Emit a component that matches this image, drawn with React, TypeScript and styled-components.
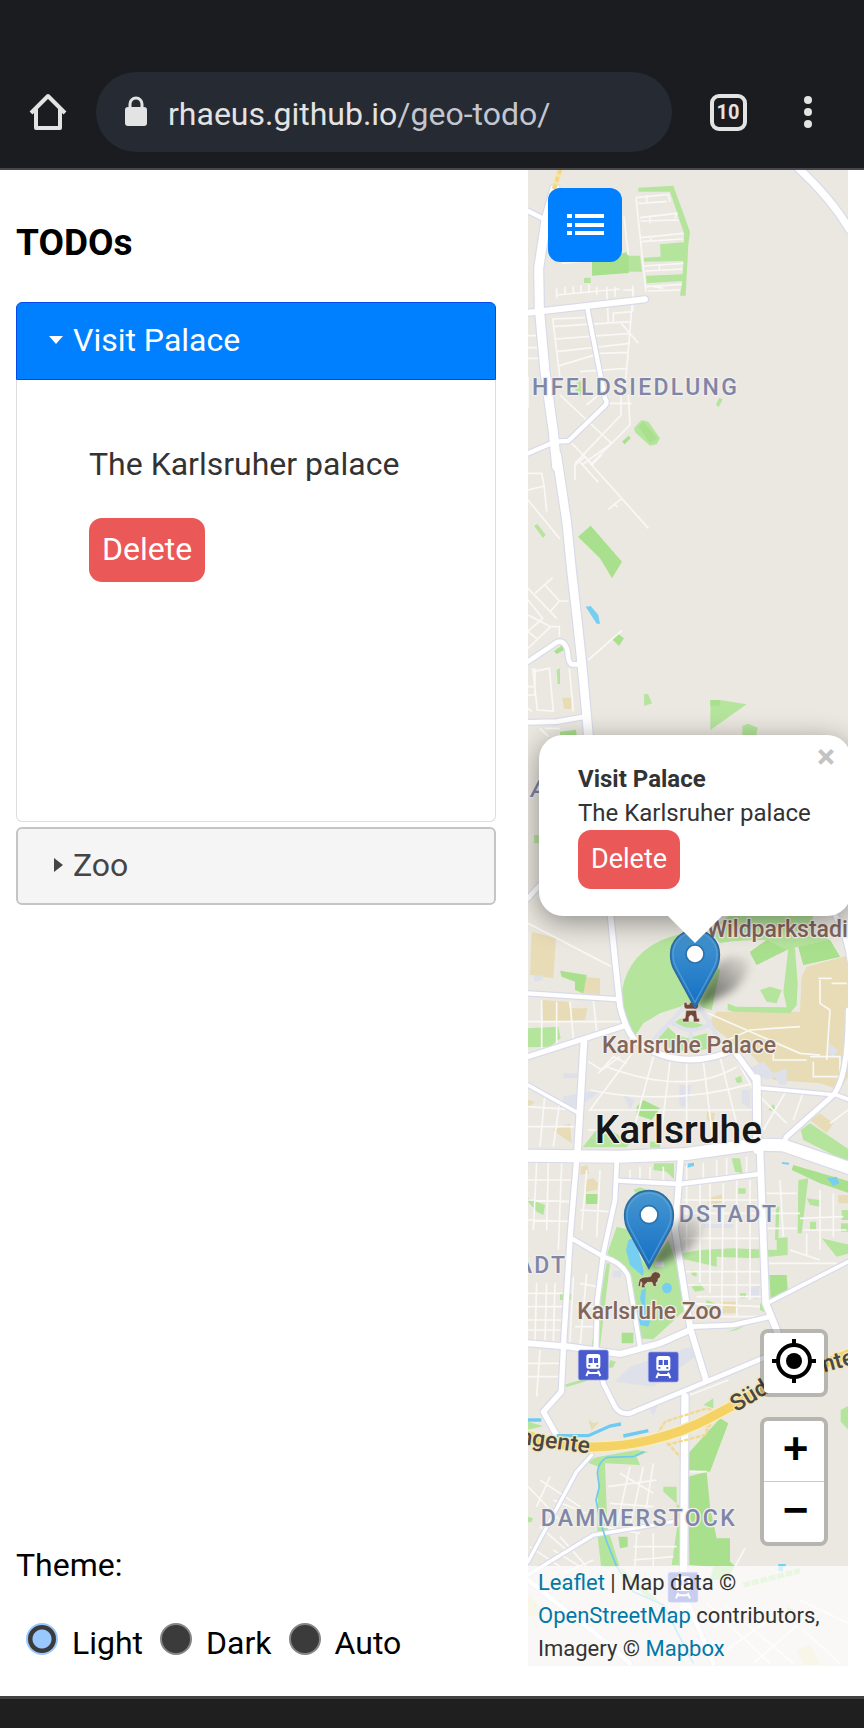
import React, { useState } from 'react';
import styled, { createGlobalStyle, css } from 'styled-components';

const GlobalStyle = createGlobalStyle`
  *, *::before, *::after { box-sizing: border-box; }
  body {
    margin: 0;
    background: #fff;
    color: #000;
    font-family: Roboto, "Liberation Sans", sans-serif;
    font-size: 32px;
  }
  button, input { font: inherit; margin: 0; }
`;

/* ---------- browser frame ---------- */

const Screen = styled.div`
  display: flex;
  flex-direction: column;
  min-height: 100vh;
`;

const BrowserBar = styled.header`
  display: flex;
  align-items: center;
  gap: 24px;
  padding: 72px 24px 16px;
  background: #1b1c20;
  border-bottom: 2px solid #46474c;
`;

const BarButton = styled.button`
  display: flex;
  align-items: center;
  justify-content: center;
  width: 48px;
  height: 48px;
  padding: 0;
  border: 0;
  background: none;
  color: #e3e3e3;
`;

const AddressBar = styled.div`
  display: flex;
  flex: 1;
  align-items: center;
  gap: 20px;
  height: 80px;
  padding: 0 28px;
  border-radius: 40px;
  background: #262a33;
  color: #e3e3e3;
  line-height: 40px;
`;

const Url = styled.span`
  padding-top: 3px;
`;

const UrlPath = styled.span`
  color: #c3c6cf;
`;

const BarActions = styled.div`
  display: flex;
  gap: 32px;
  padding: 0 8px;
`;

const TabCount = styled.span`
  display: flex;
  align-items: center;
  justify-content: center;
  width: 37px;
  height: 37px;
  border: 4px solid #e3e3e3;
  border-radius: 9px;
  font-size: 20px;
  font-weight: 700;
`;

const SystemBar = styled.footer`
  height: 32px;
  border-top: 3px solid #404242;
  background: #1f1f1f;
`;

/* ---------- page layout ---------- */

const Page = styled.main`
  display: flex;
  flex: 1;
  padding-right: 16px;
`;

const Sidebar = styled.section`
  display: flex;
  flex-direction: column;
  flex: 0 0 528px;
  padding: 51px 32px 31px 16px;
`;

const Title = styled.h1`
  margin: 0 0 37px;
  font-size: 37px;
  font-weight: 700;
  line-height: 44px;
`;

const Accordion = styled.div`
  display: flex;
  flex-direction: column;
`;

const AccordionHeader = styled.button<{ $open: boolean }>`
  display: flex;
  align-items: center;
  gap: 9px;
  height: 78px;
  padding: 0 30px 2px;
  border: 2px solid #c5c5c5;
  border-radius: 6px;
  background: #f5f5f5;
  color: #454545;
  text-align: left;
  &:not(:first-child) { margin-top: 5px; }
  ${({ $open }) => $open && css`
    border-color: #0349f0;
    border-radius: 6px 6px 0 0;
    border-width: 1px;
    padding: 0 31px 2px;
    background: #007fff;
    color: #fff;
  `}
`;

const AccordionPanel = styled.div`
  display: flex;
  flex-direction: column;
  align-items: flex-start;
  gap: 34px;
  min-height: 442px;
  padding: 64px 72px;
  border: 1px solid #ddd;
  border-top: 0;
  border-radius: 0 0 6px 6px;
  color: #333;
`;

const PanelText = styled.p`
  margin: 0;
  line-height: 40px;
`;

const DeleteButton = styled.button<{ $small?: boolean }>`
  height: ${({ $small }) => ($small ? 59 : 64)}px;
  padding: 0 13px 2px;
  border: 0;
  border-radius: 13px;
  background: #ea5958;
  color: #fff;
  font-size: ${({ $small }) => ($small ? 27 : 32)}px;
`;

const ThemeGroup = styled.fieldset`
  display: flex;
  flex-wrap: wrap;
  margin: auto 0 0;
  padding: 0;
  border: 0;
`;

const ThemeLegend = styled.legend`
  margin-bottom: 34px;
  padding: 0;
  line-height: 44px;
`;

const ThemeOption = styled.label`
  display: flex;
  align-items: center;
  gap: 14px;
  margin-right: 17px;
  line-height: 44px;
  &:first-of-type { margin-left: 10px; }
`;

const Radio = styled.input`
  appearance: none;
  width: 32px;
  height: 32px;
  margin-bottom: 8px;
  border: 2px solid #858585;
  border-radius: 50%;
  background: #3b3b3b;
  &:checked {
    border-color: #99c8ff;
    background: radial-gradient(circle, #99c8ff 9px, #3b3b3b 10px);
  }
`;

/* ---------- map ---------- */

const MapArea = styled.section`
  position: relative;
  flex: 1;
  min-width: 0;
  margin-bottom: 30px;
  overflow: hidden;
  background: #ebe8e1;
`;

const MapCanvas = styled.svg`
  position: absolute;
  inset: 0;
  width: 100%;
  height: 100%;
`;

const MenuButton = styled.button`
  position: absolute;
  top: 18px;
  left: 20px;
  display: flex;
  align-items: center;
  justify-content: center;
  width: 74px;
  height: 74px;
  padding: 0;
  border: 0;
  border-radius: 12px;
  background: #007fff;
`;

const Popup = styled.article`
  position: absolute;
  top: 565px;
  left: 11px;
  width: 312px;
  height: 181px;
  padding: 27px 39px;
  border-radius: 24px;
  background: #fff;
  box-shadow: 0 6px 28px rgba(0, 0, 0, 0.4);
  color: #333;
  font-size: 24px;
  line-height: 34px;
  white-space: nowrap;
`;

const PopupTitle = styled.strong`
  display: block;
`;

const PopupText = styled.p`
  margin: 0;
`;

const PopupClose = styled.button`
  position: absolute;
  top: 7px;
  right: 11px;
  width: 28px;
  height: 28px;
  padding: 0;
  border: 0;
  background: none;
  color: #c3c3c3;
  font-size: 34px;
  font-weight: 700;
  line-height: 28px;
`;

const PopupTip = styled.span`
  position: absolute;
  top: 181px;
  left: 129px;
  width: 54px;
  height: 27px;
  background: #fff;
  clip-path: polygon(0 0, 100% 0, 50% 100%);
`;

const Overlay = styled.div`
  position: absolute;
  right: 0;
  bottom: 0;
  left: 0;
  display: flex;
  flex-direction: column;
  align-items: flex-end;
  gap: 20px;
`;

const ControlBox = styled.div`
  display: flex;
  flex-direction: column;
  margin-right: 20px;
  border: 4px solid rgba(0, 0, 0, 0.22);
  border-radius: 8px;
  background: #fff;
  background-clip: padding-box;
`;

const ControlButton = styled.button`
  display: flex;
  align-items: center;
  justify-content: center;
  width: 60px;
  height: 60px;
  padding: 0 0 4px;
  border: 0;
  background: none;
  color: #000;
  font-family: "Liberation Sans", sans-serif;
  font-size: 44px;
  font-weight: 700;
  line-height: 56px;
  text-indent: 3px;
  & + & {
    height: 61px;
    border-top: 1px solid #ccc;
  }
`;

const Attribution = styled.p`
  align-self: stretch;
  margin: 0;
  padding: 0 10px 1px;
  background: rgba(255, 255, 255, 0.7);
  color: #333;
  font-size: 22px;
  line-height: 33px;
`;

const MapLink = styled.a`
  color: #0078a8;
  text-decoration: none;
`;

/* Map geometry. Each sheet covers one horizontal band of the city, at three
   drawing units to the pixel, and y is the offset of that band. */

type Road = [d: string, width: number];
interface Sheet {
  y: number;
  green?: string;
  park?: string;
  sand?: string;
  water?: string;
  block?: string;
  lanes?: string;
  roads?: Road[];
}

const sheets: Sheet[] = [
  {
    y: 0,
    green:
      'M355 68L460 62L510 200L505 240L497 392H480L487 348L380 355L378 332L488 328L490 288L372 290V278L422 275L420 238L492 232V205L450 80H355Z M320 272H360L366 320H320Z M192 338h20v16h-20Z M160 665l20-20 15 20-15 30Z M588 718l10-20 10 5-12 24Z M342 790L365 765L385 770L420 820L410 838L390 842L345 802Z',
    park: 'M216 292L318 262L326 272V324L216 332Z M306 830l20-18 6 8-18 18Z M355 785L370 770L412 820L390 835Z',
    lanes:
      'M348 98L378 382M348 98L445 88L450 110M355 115L440 110M360 158L470 145L465 160M362 168L475 165M362 218L490 205M365 230L488 222M372 303L490 295M375 318L488 312M378 365L485 358M385 378L480 375M312 155L325 270M380 90V115M390 158V175M392 212V230M418 300V318M402 365L430 370M110 390L300 372M110 370V400M135 365V390M160 362V388M183 360V385M207 358V385M230 365V390M260 365L265 475M285 365V395M310 375H340L322 590L312 690M338 362V440M98 460L120 640M98 462L195 458M98 485L330 470M105 522L330 505M110 560L330 535M118 602L240 565L325 562M180 620L320 610M280 470V445L335 440M300 470L355 535M24 512H55M24 548H60M24 580H62M120 690L275 835L185 900M325 690L330 780L210 900M303 690V750L165 895M260 715H335M200 720L235 690M155 835L220 900M125 295L200 288M24 635V730',
    roads: [
      ['M24 138L78 165', 14],
      ['M105 70L78 165L56 310L58 430L75 620L100 800L110 905', 27],
      ['M24 443L375 403', 18],
      ['M202 430L255 700Q264 712 255 722L145 828L105 830L24 865', 13],
      ['M825 0Q930 95 990 195', 22],
    ],
  },
  {
    y: 870,
    green:
      'M42 212l10-5 25 32-8 10Z M110 645l10-5v47h-7Z M372 718L384 717L396 745L373 753Z M571 735H600L680 748L571 825Z M667 812L685 806L713 818L708 845H667Z M42 1140h14v25h-14Z',
    park: 'M174 245L212 212L306 320L276 370L240 310Z M276 552L292 535L312 550L297 573Z M102 588L125 572L132 585L110 597Z M571 735H600V752H571Z M120 830L168 824L170 840H120Z',
    sand: 'M126 728H156L153 762H133Z',
    water: 'M197 455L212 453L235 480L240 506H230Z',
    lanes:
      'M190 0L215 30L305 130L385 220M165 75V30L195 5M215 30L245 0M305 130L265 163M283 145l10 12M175 15L235 82M24 135L120 252M24 55H65L72 90L80 170M24 105L72 93M24 400L110 490M92 515L24 580M45 415L98 368M75 390L118 438H145M118 438L92 468M24 435L68 490L24 528M24 480L92 515H118V545M24 530L50 550M205 615L305 527M38 640L52 765L100 768L88 640L38 650M24 695H42M24 720H45V640M148 640L160 770M60 820L85 845M75 820L120 820M24 760L35 770',
    roads: [
      ['M24 620L110 562Q135 552 143 590Q145 630 160 628L182 628', 14],
      ['M24 802L110 800L195 785', 14],
      ['M110 0L140 200L155 350L170 480L185 620L207 860', 26],
      ['M24 1330L60 1290', 14],
    ],
  },
  {
    y: 2235,
    green:
      'M345 378Q288 290 312 215Q345 105 480 72L600 180L575 300L540 290H480L420 310L370 340Z M650 0H880L875 60L930 90L960 140L850 165L835 110L800 120L710 165L690 130L740 90Q640 90 600 100L570 60Z M805 115H825L833 220L830 285L810 310L640 305L623 300V280L648 290L800 292L790 245Z M720 240L750 230L785 240L770 280L740 275Z M24 355L115 350L122 385L90 410L24 412Z M188 712L245 640L330 700L320 712Z M645 505l18-8 4 20-16 3Z M745 600l15-18 8 22Z M842 660L870 640L990 720V760L850 690Z M455 345L480 325L570 350L510 365Z M415 385L445 352L470 375L500 385L560 370L580 410Q500 440 430 405Z M390 695h30v18h-30Z',
    park: 'M120 182L200 195L190 250L165 240V215L125 200Z M350 590L370 570L420 595L395 630L350 615Z M690 125L740 90L800 120L710 165Z M835 110L930 90L960 140L850 165Z',
    sand: 'M35 65L108 85L100 205L30 195Z M190 200L240 205V255L180 248Z M65 270L145 275L150 295H202L195 330L70 335Z M860 170L990 135V490L960 540L900 520L760 510L700 440L640 400L565 340L590 305L840 305L845 200Z M98 660L150 640L155 700Z M870 630L900 610L940 640L920 670Z M560 605L585 610L580 640L560 630Z M24 570l20 5-20 20Z',
    block:
      'M478 525H515L500 590H478Z M128 560L200 545L240 540L215 565L170 590H130Z M690 475L730 455L760 490L800 475V525H780L765 500L740 510Z M310 555L345 570L330 600Z M130 490H180V505H130Z M665 540H690V595L665 580Z M925 400L955 420L940 440L925 430Z M40 200L65 195L70 210L45 215Z M485 285H545V300H485Z',
    lanes:
      'M24 40L275 170M65 270V420M110 275V400M150 275L160 385M24 335H300M220 270L230 365M205 455L245 480L300 440M235 490L280 440L320 460M340 425L210 600M400 440L330 700M450 455L420 700M500 460V700M550 455L580 700M600 440L650 640M640 430L700 540M210 540Q450 590 700 520M205 600H700M260 470Q500 560 650 470M205 660H240M24 590L170 600M75 550L60 710M120 570L100 710M24 650H170M565 310L840 430L900 435M600 400L690 360L840 350M870 440H960V500H880V455M900 210V280L930 300L920 450M895 205H935M935 220H980M720 560L800 640M800 540L730 660M850 545L820 630M930 640L984 600M760 400V450H860',
    roads: [
      ['M24 250L300 268', 13],
      ['M24 440L312 348', 15],
      ['M24 525L180 612', 11],
      ['M270 0L285 150L300 290Q320 370 350 395Q420 447 510 449Q590 447 640 418', 17],
      ['M630 405L708 512', 17],
      ['M712 533L950 555L990 570', 11],
      ['M945 15Q990 90 995 200M785 710L800 680L940 555Q985 500 985 300', 15],
      ['M192 390L172 735', 20],
      ['M710 505L712 720', 24],
      ['M24 737L300 740L500 732L700 704L790 706L990 775', 36],
    ],
  },
  {
    y: 2955,
    green:
      'M290 230L330 240L340 290L385 355L445 270L495 420V480L400 568L355 565L335 400L262 310Z M340 120l20-8 25 8-30 15Z M402 40H462V88L440 65L400 60Z M635 25H660L668 70L645 65Z M24 145L75 165L70 195L50 185L24 155Z M475 312L540 300L640 295L770 300V265L803 262V315L700 325L590 320V350L480 325Z M768 170h10L775 270H765Z M835 90L865 85L845 250H833Z M860 145L900 150V170L870 165Z M905 265L990 285V310L950 320Z M965 180h25v30H965Z M963 220h25v25h-25Z M655 115h22v16h-22Z M660 430h18v15h-18Z M260 340H270L240 590L215 585Z M515 410l25-10 15 20-30 5Z M515 360l15 5v15l-15-5Z M870 215h18v25h-18Z M560 450l25 10-10 30-20-10Z M720 460h20v30l-20-10Z M620 545L680 525L650 540Z M120 432h35v18h-35Z M930 0H990V15L950 12Z',
    park: 'M820 45L990 95V130L900 100L815 60Z M198 132h35v30h-35Z M748 375H800L804 430L752 445Z M305 548h35v32h-35Z',
    sand: 'M195 90L220 85L235 100L230 120L195 125Z M182 50l20-5 5 25-25 5Z M565 145l45-13v25l-45 10Z M600 455h48v35h-42Z M955 135h30v25h-30Z M470 418l15 2v15l-15 2Z',
    water:
      'M325 270L340 265L355 300L372 365L368 378L330 345L318 300Z M426 414a15 16 0 1 0 30 0a15 16 0 1 0-30 0Z M365 420L378 415L375 465L395 500L385 530L360 525L355 500L370 480L360 445Z M495 42l27-4v10l-22 6Z M922 85L950 80L958 100L940 108Z M785 36l22 2v6l-20-2Z',
    block:
      'M285 695L330 650L510 590L540 610L400 710Z M685 415L720 405L715 450L690 440Z M278 362h25v20h-25Z M550 222h90v12h-90Z M405 335h28v15h-28Z',
    lanes:
      'M24 90H160M24 150L160 155M24 210L160 215M50 40L40 240M85 40L80 240M125 40L115 300M180 180L270 185M200 60L185 240M240 60L230 260M24 430H140M24 470H135M24 510H130M24 540H135M50 400L45 570M80 400L75 570M105 400L100 580M24 640H120M24 680H115M60 600L50 740M500 40V300M540 100V400M570 100V430M610 100L605 500M650 90V500M690 90V450M490 150H720M490 190H720M490 265H720M490 365H730M500 405H730M530 440H730M510 460L720 470M560 500H730M780 90L790 260M740 130H830M740 190H840M740 235H830M860 250V320M900 120V300M940 130V260M840 205L970 200M850 240H980M810 300L900 330M745 340H950M180 400L230 410M170 470H225M165 530H220M160 380L150 580M200 370L180 590M330 60V90M360 50V85M390 50V88M430 50V90M550 40V90M590 30V85M620 25V85M680 20V70',
    roads: [
      ['M170 30L152 240L132 560L124 725L70 785L112 860', 16],
      ['M290 40L285 150L250 310L232 450L228 590L250 700L285 770Q300 795 330 790L560 695L740 620', 14],
      ['M290 92L480 102L720 72', 13],
      ['M155 265L250 320Q310 340 325 380L360 590', 13],
      ['M24 580L150 590L300 612L420 580L510 540', 18],
      ['M515 530L640 525L750 500', 14],
      ['M737 462L990 332', 11],
      ['M482 30L465 240L490 400L512 540L558 690', 18],
      ['M720 0L737 460L772 545', 20],
    ],
  },
  {
    y: 3465,
    green:
      'M196 425L235 440L232 640L243 738H298L262 620L255 430L360 435L350 410L385 395L350 390L230 412Z M430 500H470V560L490 735H455L480 560L430 515Z M550 255l30-20v30Z M962 270L990 255V335L962 305Z M24 590l15 5-5 12H24Z M24 305L70 318L24 330Z M130 195l70-20v8l-60 18Z M270 120l18 5-10 18h-12Z',
    park: 'M600 295L625 310L570 455L500 450L505 400Z M505 470L560 455L570 560L590 655H630V725L645 738L620 780H570L580 740L508 735Z M295 650h28v30L300 685Z',
    sand: 'M205 300L222 310L238 305L215 332Z',
    block: 'M385 262l30-8-15 35Z',
    lanes:
      'M265 500L410 480M270 550L400 560M330 440L290 620M370 440L330 620M400 430L370 620M300 460L400 520M24 500L120 600M60 480L180 560M90 470L50 560M100 540L200 580M60 620L150 700M30 680L120 740M120 650L200 740M340 680H470M350 640L345 740M400 640V740M340 720L460 710M250 620L360 640M510 455h50M675 685L645 740M510 225L625 180',
    roads: [
      ['M24 725L170 455L215 405', 10],
      ['M24 765L220 645L460 605', 10],
      ['M495 230L490 865', 22],
    ],
  },
  {
    y: 4125,
    green: 'M240 0L250 80H298L270 0Z M300 80L420 185L380 170L310 110Z M800 200l25 10-20 5Z',
    sand: 'M830 330L870 315L905 375H850Z M24 160L75 220L24 230Z',
    water: 'M775 72h22v8h-8v14h-14Z',
    lanes: 'M560 190L750 370M620 200L820 370M620 330L760 230M700 370L850 240M580 260L680 200M850 270L960 370M100 30L180 80M130 100L220 60M840 180L984 250',
    roads: [
      ['M24 120L250 300L330 370', 13],
      ['M500 180L580 370', 13],
    ],
  },
];

const layers: Array<[keyof Sheet, string]> = [
  ['sand', '#e7dcb5'],
  ['green', '#b5e59d'],
  ['park', '#a9e08d'],
  ['block', '#dfe1ea'],
  ['water', '#76cef1'],
];

const PlaceLabel = styled.text<{ $kind: 'district' | 'poi' | 'city' | 'road' }>`
  font-family: Roboto, "Liberation Sans", sans-serif;
  font-weight: 500;
  font-size: 69px;
  paint-order: stroke;
  stroke: #f1efea;
  stroke-width: 8px;
  stroke-linejoin: round;
  fill: #83665b;
  ${({ $kind }) => $kind === 'district' && css`
    letter-spacing: 7px;
    fill: #7f86a8;
  `}
  ${({ $kind }) => $kind === 'city' && css`
    font-size: 117px;
    fill: #151719;
  `}
  ${({ $kind }) => $kind === 'road' && css`
    fill: #494846;
    stroke: #f3e5b3;
  `}
`;

const Marker = ({ x, y }: { x: number; y: number }) => (
  <g transform={`translate(${x} ${y})`}>
    <path d="M0 0L50 -110Q90 -175 160 -150Q175 -105 110 -50Z" fill="url(#pinShadow)" filter="url(#soft)" />
    <path
      d="M0 -2L-62 -116C-70 -130 -73 -146 -73 -162A73 73 0 0 1 73 -162C73 -146 70 -130 62 -116Z"
      fill="url(#pin)"
      stroke="#2c6c9f"
      strokeWidth="5"
    />
    <path
      d="M0 -18L-55 -120C-63 -134 -66 -148 -66 -162A66 66 0 0 1 66 -162C66 -148 63 -134 55 -120Z"
      fill="none"
      stroke="#6aaada"
      strokeOpacity="0.6"
      strokeWidth="4"
    />
    <circle cy="-163" r="27" fill="#fff" stroke="#2c72ab" strokeWidth="5" />
  </g>
);

const Station = ({ x, y }: { x: number; y: number }) => (
  <g transform={`translate(${x} ${y})`}>
    <rect width="90" height="90" rx="6" fill="#4a5ccd" stroke="#9aa5e6" strokeWidth="2" />
    <path
      fillRule="evenodd"
      d="M24 20Q24 12 32 12H58Q66 12 66 20V50Q66 56 60 56H30Q24 56 24 50ZM31 24V39H43V24ZM47 24V39H59V24ZM30 45V50H36V45ZM54 45V50H60V45Z"
      fill="#fff"
    />
    <path d="M31 62L24 78M59 62L66 78M29 69H61" stroke="#fff" strokeWidth="6" />
  </g>
);

const CityMap = () => (
  <MapCanvas viewBox="24 15 960 4488" preserveAspectRatio="xMinYMin slice" role="img" aria-label="Map of Karlsruhe">
    <defs>
      <linearGradient id="pin" x1="0" y1="0" x2="0" y2="1">
        <stop offset="0" stopColor="#4797d1" />
        <stop offset="1" stopColor="#136fc4" />
      </linearGradient>
      <linearGradient id="pinShadow" x1="0" y1="1" x2="1" y2="0">
        <stop offset="0" stopColor="#000" stopOpacity="0.65" />
        <stop offset="0.5" stopColor="#000" stopOpacity="0.35" />
        <stop offset="1" stopColor="#000" stopOpacity="0.02" />
      </linearGradient>
      <filter id="soft" x="-40%" y="-40%" width="180%" height="180%">
        <feGaussianBlur stdDeviation="12" />
      </filter>
    </defs>

    {layers.map(([key, fill]) =>
      sheets.map((s) => s[key] && (
        <path key={`${key}${s.y}`} d={s[key] as string} fill={fill} transform={`translate(0 ${s.y})`} />
      )),
    )}
    {sheets.map((s) => (
      <path key={s.y} d={s.lanes} transform={`translate(0 ${s.y})`} fill="none" stroke="#f9f8f6" strokeWidth="5" />
    ))}
    <path
      d="M490 2530L400 2625M540 2530L600 2625M455 2570Q515 2620 575 2570M512 2590V2650"
      fill="none"
      stroke="#dfe1ec"
      strokeWidth="12"
    />
    {['#d8daea', '#ffffff'].map((stroke, i) => (
      <g key={stroke} fill="none" stroke={stroke} strokeLinejoin="round" strokeLinecap="round">
        {sheets.map((s) => (s.roads ?? []).map(([d, w]) => (
          <path key={`${s.y}${d}`} d={d} transform={`translate(0 ${s.y})`} strokeWidth={i ? w : w + 7} />
        )))}
      </g>
    ))}

    <path d="M102 72L122 10" stroke="#f7e3a6" strokeWidth="16" fill="none" />
    <path d="M102 72L122 10" stroke="#f3d585" strokeWidth="10" strokeDasharray="14 10" fill="none" />

    <g transform="translate(0 3465)" fill="none">
      <g stroke="#6fcaf2" strokeWidth="10">
        <path d="M24 300H64M110 347H205L270 318L303 312M310 348L385 332" />
        <path
          d="M372 395L340 410L262 412Q235 425 232 460L238 500L228 540L242 610L262 670L290 740L340 815L430 855L520 1030"
          strokeWidth="5"
        />
      </g>
      <path
        d="M410 345L435 305L560 265L600 280M430 355L480 410M440 375L555 345L575 305M560 290V340"
        stroke="#f2d98c"
        strokeWidth="7"
        strokeDasharray="14 4"
      />
      <path d="M20 345Q120 380 220 381Q310 380 390 360Q490 336 570 293Q650 252 730 205L990 100" stroke="#f8ecc4" strokeWidth="36" />
      <path d="M20 345Q120 380 220 381Q310 380 390 360Q490 336 570 293Q650 252 730 205L990 100" stroke="#f4d264" strokeWidth="27" />
      <path d="M670 795L750 775L840 752" stroke="#b5e59d" strokeWidth="16" strokeDasharray="22 4" />
    </g>

    <g transform="translate(488 2512)" fill="#70493a" stroke="#efe7dc" strokeWidth="2">
      <path d="M4 0H13V6H20V0H31V6H38V0H47V14L42 20H9L4 14Z" />
      <path d="M10 24H41L44 48H50V59H32V44Q25 34 19 44V59H0V48H7Z" />
    </g>
    <g transform="translate(352 3318)" fill="#6b4a38" stroke="#e8dfcc" strokeWidth="2">
      <path d="M6 26Q14 16 30 18L40 16Q42 4 54 2Q66 2 70 12L68 20Q60 22 62 30L56 36L58 46H48L44 34L30 34L22 42L24 50H12L14 36L11 32L8 48L2 44Z" />
    </g>

    <Station x={175} y={3555} />
    <Station x={385} y={3561} />
    <Station x={444} y={4222} />

    <PlaceLabel $kind="district" x="36" y="690">HFELDSIEDLUNG</PlaceLabel>
    <PlaceLabel $kind="district" x="32" y="1897" fontStyle="italic">A</PlaceLabel>
    <PlaceLabel $kind="poi" x="560" y="2316">Wildparkstadi</PlaceLabel>
    <PlaceLabel $kind="poi" x="246" y="2663">Karlsruhe Palace</PlaceLabel>
    <PlaceLabel $kind="city" x="224" y="2934">Karlsruhe</PlaceLabel>
    <PlaceLabel $kind="district" x="476" y="3171">DSTADT</PlaceLabel>
    <PlaceLabel $kind="district" x="-10" y="3323">ADT</PlaceLabel>
    <PlaceLabel $kind="poi" x="172" y="3463">Karlsruhe Zoo</PlaceLabel>
    <PlaceLabel $kind="road" transform="translate(-4 3836) rotate(8)">ngente</PlaceLabel>
    <PlaceLabel $kind="road" transform="translate(648 3742) rotate(-31)">Süd</PlaceLabel>
    <PlaceLabel $kind="road" transform="translate(912 3622) rotate(-15)">nte</PlaceLabel>
    <PlaceLabel $kind="district" x="62" y="4082">DAMMERSTOCK</PlaceLabel>

    <Marker x={525} y={2530} />
    <Marker x={387} y={3312} />
  </MapCanvas>
);

const themes = ['Light', 'Dark', 'Auto'];

export default function App() {
  const [theme, setTheme] = useState('Light');
  return (
    <Screen>
      <GlobalStyle />
      <BrowserBar>
        <BarButton aria-label="Home">
          <svg width="38" height="38" viewBox="0 0 38 38" fill="none" stroke="currentColor" strokeWidth="4">
            <path d="M2 20L19 3L36 20M7 16V35H31V16" strokeLinejoin="round" />
          </svg>
        </BarButton>
        <AddressBar>
          <svg width="24" height="32" viewBox="0 0 24 32">
            <rect x="1" y="11" width="22" height="19" rx="3" fill="#e3e3e3" />
            <path d="M6 12V8A6 6 0 0 1 18 8V12" fill="none" stroke="#e3e3e3" strokeWidth="3" />
          </svg>
          <Url>rhaeus.github.io<UrlPath>/geo-todo/</UrlPath></Url>
        </AddressBar>
        <BarActions>
          <BarButton aria-label="Tabs"><TabCount>10</TabCount></BarButton>
          <BarButton aria-label="More options">
            <svg width="10" height="34" viewBox="0 0 10 34" fill="currentColor">
              <circle cx="5" cy="5" r="4" />
              <circle cx="5" cy="17" r="4" />
              <circle cx="5" cy="29" r="4" />
            </svg>
          </BarButton>
        </BarActions>
      </BrowserBar>

      <Page>
        <Sidebar>
          <Title>TODOs</Title>
          <Accordion>
            <AccordionHeader $open aria-expanded="true">
              <svg width="16" height="16" viewBox="0 0 16 16" fill="#fff"><path d="M1 4H15L8 12Z" /></svg>
              Visit Palace
            </AccordionHeader>
            <AccordionPanel>
              <PanelText>The Karlsruher palace</PanelText>
              <DeleteButton>Delete</DeleteButton>
            </AccordionPanel>
            <AccordionHeader $open={false} aria-expanded="false">
              <svg width="16" height="16" viewBox="0 0 16 16" fill="#454545"><path d="M6 1V15L15 8Z" /></svg>
              Zoo
            </AccordionHeader>
          </Accordion>
          <ThemeGroup>
            <ThemeLegend>Theme:</ThemeLegend>
            {themes.map((name) => (
              <ThemeOption key={name}>
                <Radio type="radio" name="theme" checked={theme === name} onChange={() => setTheme(name)} />
                {name}
              </ThemeOption>
            ))}
          </ThemeGroup>
        </Sidebar>

        <MapArea>
          <CityMap />
          <Popup>
            <PopupTitle>Visit Palace</PopupTitle>
            <PopupText>The Karlsruher palace</PopupText>
            <DeleteButton $small>Delete</DeleteButton>
            <PopupClose aria-label="Close popup">×</PopupClose>
            <PopupTip />
          </Popup>
          <MenuButton aria-label="Toggle list">
            <svg width="37" height="22" viewBox="0 0 37 22" fill="#fff">
              <path d="M0 0h5v4H0zM0 9h5v4H0zM0 17h5v4H0zM8 0h29v4H8zM8 9h29v4H8zM8 17h29v4H8z" />
            </svg>
          </MenuButton>
          <Overlay>
            <ControlBox>
              <ControlButton aria-label="Locate me">
                <svg width="46" height="46" viewBox="0 0 46 46" fill="none" stroke="#000" strokeWidth="4">
                  <circle cx="23" cy="23" r="16" />
                  <path d="M23 1V8M23 38V45M1 23H8M38 23H45" />
                  <circle cx="23" cy="23" r="8" fill="#000" stroke="none" />
                </svg>
              </ControlButton>
            </ControlBox>
            <ControlBox>
              <ControlButton aria-label="Zoom in">+</ControlButton>
              <ControlButton aria-label="Zoom out">−</ControlButton>
            </ControlBox>
            <Attribution>
              <MapLink href="#leaflet">Leaflet</MapLink> | Map data ©{' '}
              <MapLink href="#osm">OpenStreetMap</MapLink> contributors, Imagery ©{' '}
              <MapLink href="#mapbox">Mapbox</MapLink>
            </Attribution>
          </Overlay>
        </MapArea>
      </Page>
      <SystemBar />
    </Screen>
  );
}
